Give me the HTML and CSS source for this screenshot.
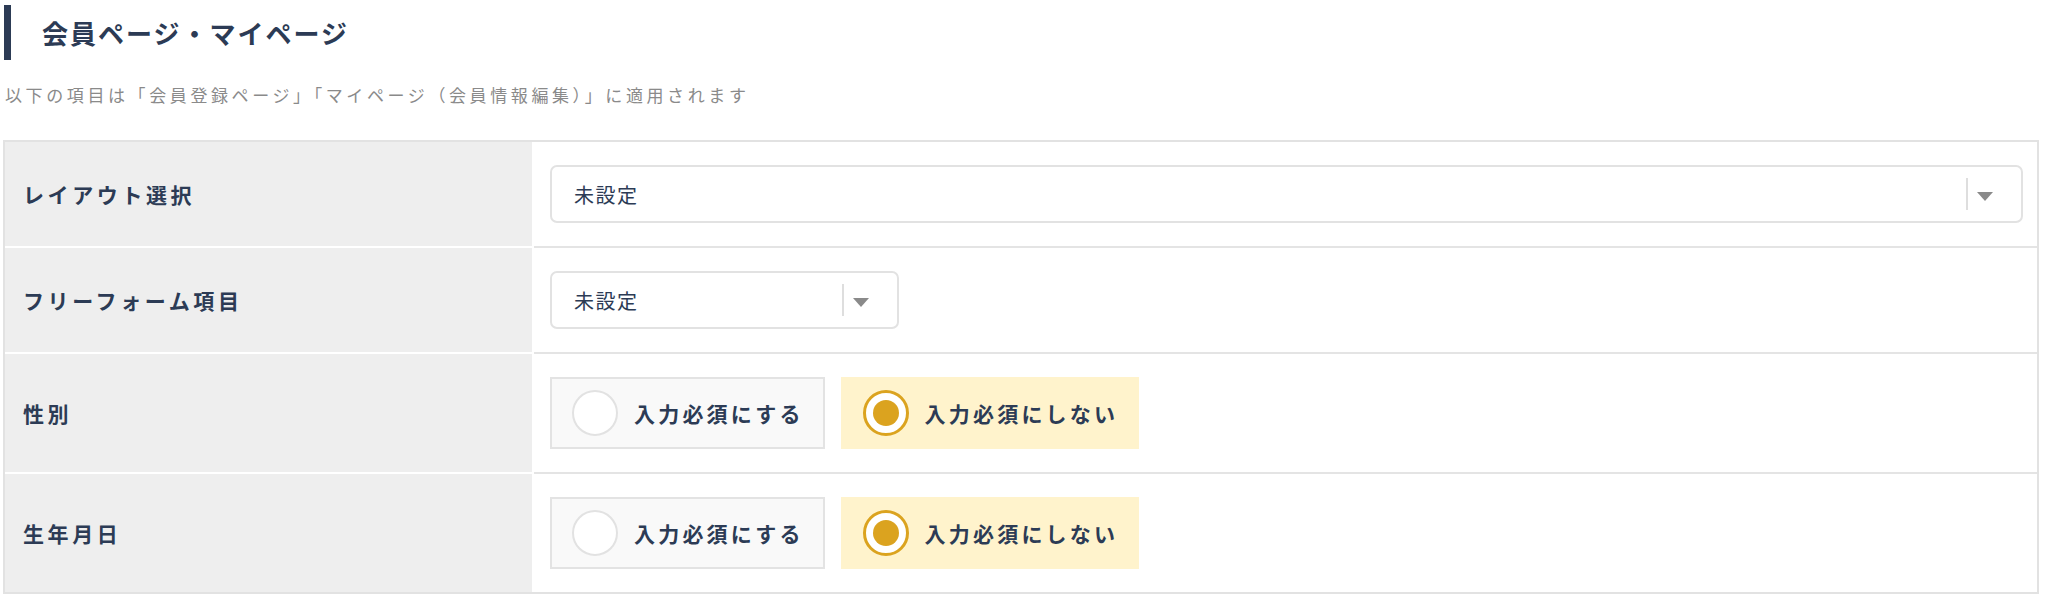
FILE: index.html
```html
<!DOCTYPE html>
<html lang="ja">
<head>
<meta charset="utf-8">
<title>会員ページ・マイページ</title>
<link rel="stylesheet" href="styles.css">
</head>
<body>
<div class="page">
  <h2 class="section-title">会員ページ・マイページ</h2>
  <p class="note">以下の項目は「会員登録ページ」「マイページ（会員情報編集）」に適用されます</p>
  <div class="form-table">
    <div class="row">
      <div class="label">レイアウト選択</div>
      <div class="value">
        <div class="select">
          <span class="select-text">未設定</span>
          <span class="select-divider"></span>
          <span class="select-arrow"></span>
        </div>
      </div>
    </div>
    <div class="row">
      <div class="label">フリーフォーム項目</div>
      <div class="value">
        <div class="select select-narrow">
          <span class="select-text">未設定</span>
          <span class="select-divider"></span>
          <span class="select-arrow"></span>
        </div>
      </div>
    </div>
    <div class="row">
      <div class="label">性別</div>
      <div class="value">
        <div class="choices">
          <label class="choice"><span class="radio"></span><span class="choice-text">入力必須にする</span></label>
          <label class="choice is-checked"><span class="radio"><span class="radio-dot"></span></span><span class="choice-text">入力必須にしない</span></label>
        </div>
      </div>
    </div>
    <div class="row">
      <div class="label">生年月日</div>
      <div class="value">
        <div class="choices">
          <label class="choice"><span class="radio"></span><span class="choice-text">入力必須にする</span></label>
          <label class="choice is-checked"><span class="radio"><span class="radio-dot"></span></span><span class="choice-text">入力必須にしない</span></label>
        </div>
      </div>
    </div>
  </div>
</div>
</body>
</html>
```

FILE: styles.css
```css
* {
  box-sizing: border-box;
}

body {
  margin: 0;
  background: #ffffff;
  font-family: "Noto Sans CJK JP", "Noto Sans", sans-serif;
  color: #2c3b55;
}

.page {
  padding: 5px 0 0 3px;
  width: 2039px;
}

.section-title {
  margin: 0 0 0 1px;
  height: 55px;
  border-left: 7px solid #2c3b55;
  padding-left: 31px;
  display: flex;
  align-items: center;
  font-size: 26px;
  font-weight: 700;
  letter-spacing: 2px;
  line-height: 1;
  color: #2c3b55;
}

.note {
  margin: 23px 0 0 2px;
  font-size: 17px;
  line-height: 24px;
  letter-spacing: 3.6px;
  color: #8a8a8a;
}

.form-table {
  margin-top: 33px;
  width: 2036px;
  border: 2px solid #e2e2e2;
}

.row {
  display: flex;
}

.label {
  flex: none;
  width: 529px;
  background: #eeeeee;
  border-right: 2px solid #ffffff;
  border-bottom: 2px solid #ffffff;
  padding-left: 18px;
  display: flex;
  align-items: center;
  font-size: 21px;
  font-weight: 700;
  letter-spacing: 3.6px;
  color: #2c3b55;
}

.value {
  flex: 1;
  padding: 23px 14px 23px 16px;
  border-bottom: 2px solid #e4e4e4;
}

.row:last-child .label,
.row:last-child .value {
  border-bottom: none;
}

.select {
  height: 58px;
  border: 2px solid #e2e2e2;
  border-radius: 7px;
  background: #ffffff;
  display: flex;
  align-items: center;
  padding-left: 22px;
}

.select-narrow {
  width: 349px;
}

.select-text {
  font-size: 20px;
  letter-spacing: 1.5px;
  color: #2c3b55;
}

.select-divider {
  margin-left: auto;
  width: 2px;
  height: 32px;
  background: #dedede;
}

.select-arrow {
  margin: 4px 28px 0 9px;
  width: 0;
  height: 0;
  border-left: 8px solid transparent;
  border-right: 8px solid transparent;
  border-top: 9px solid #8a8a8a;
}

.choices {
  display: flex;
  gap: 16px;
}

.choice {
  height: 72px;
  display: flex;
  align-items: center;
  gap: 16px;
  padding: 0 19px 0 20px;
  border: 2px solid #e3e3e3;
  background: #f9f9f9;
}

.choice.is-checked {
  border-color: #fff3cc;
  background: #fff3cc;
}

.radio {
  flex: none;
  width: 46px;
  height: 46px;
  border-radius: 50%;
  border: 2px solid #e2e2e2;
  background: #ffffff;
  display: flex;
  align-items: center;
  justify-content: center;
}

.is-checked .radio {
  border: 3px solid #dba31f;
}

.radio-dot {
  width: 26px;
  height: 26px;
  border-radius: 50%;
  background: #dba31f;
}

.choice-text {
  font-size: 21px;
  font-weight: 700;
  letter-spacing: 3.2px;
  color: #2c3b55;
}
```
